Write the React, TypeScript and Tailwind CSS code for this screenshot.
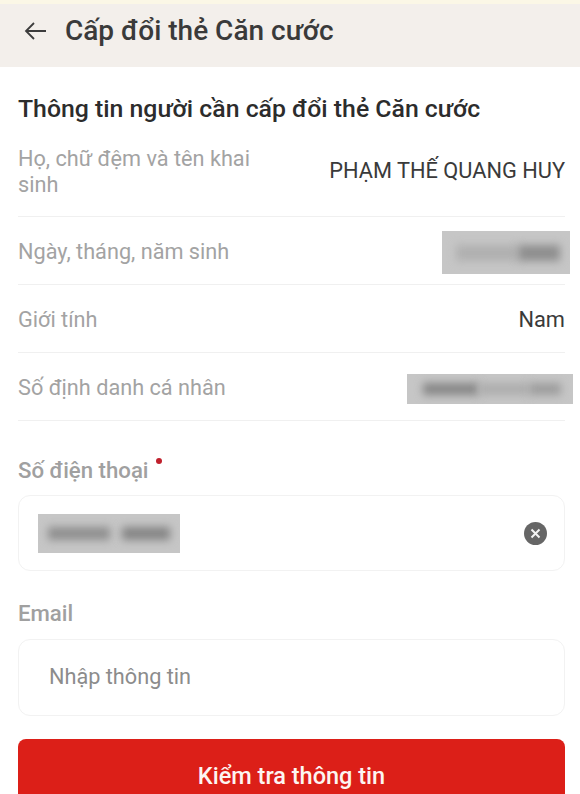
import React from 'react';

function Redacted({ className, bars }: { className: string; bars: string[] }) {
  return (
    <div className={`flex items-center overflow-hidden bg-[#c6c6c6] ${className}`}>
      {bars.map((b, i) => (
        <div key={i} className={`blur-[4px] ${b}`} />
      ))}
    </div>
  );
}

function InfoRow({ label, children }: { label: string; children: React.ReactNode }) {
  return (
    <div className="flex h-[68px] items-center justify-between border-b border-[#f0f0f0] pt-[4px]">
      <span className="text-[21.7px] text-[#a3a3a3]">{label}</span>
      {children}
    </div>
  );
}

export default function App() {
  return (
    <div className="h-[794px] w-[580px] overflow-hidden bg-white font-['Roboto',sans-serif]">
      <div className="h-[4px] bg-[#fbf7e6]" />
      <header className="flex h-[63px] items-center bg-[#f3efeb] pb-[9px] pl-[24px]">
        <svg width="23" height="20" viewBox="0 0 23 20" fill="none" stroke="#3c3c3c" strokeWidth="1.8">
          <path d="M22 10H2M10 2L2 10l8 8" />
        </svg>
        <h1 className="ml-[18px] text-[28px] font-medium text-[#3a3a3a]">Cấp đổi thẻ Căn cước</h1>
      </header>

      <main className="px-[15px] pl-[18px]">
        <h2 className="mt-[26px] text-[24.8px] leading-[32px] font-medium text-[#2c2c2c]">
          Thông tin người cần cấp đổi thẻ Căn cước
        </h2>

        <div className="mt-[2px] flex h-[90px] items-center justify-between border-b border-[#f0f0f0]">
          <span className="w-[250px] text-[21.7px] leading-[26px] text-[#a3a3a3]">Họ, chữ đệm và tên khai sinh</span>
          <span className="text-[21.8px] text-[#3a3a3a]">PHẠM THẾ QUANG HUY</span>
        </div>
        <InfoRow label="Ngày, tháng, năm sinh">
          <Redacted
            className="mr-[-5px] h-[43px] w-[128px] pl-[14px]"
            bars={['h-[16px] w-[62px] bg-[#b0b0b0]', 'h-[16px] w-[42px] bg-[#8e8e8e]']}
          />
        </InfoRow>
        <InfoRow label="Giới tính">
          <span className="text-[21.8px] text-[#3a3a3a]">Nam</span>
        </InfoRow>
        <InfoRow label="Số định danh cá nhân">
          <Redacted
            className="mr-[-8px] h-[30px] w-[166px] pl-[16px]"
            bars={['h-[12px] w-[56px] bg-[#868686]', 'h-[12px] w-[50px] bg-[#adadad]', 'h-[12px] w-[32px] bg-[#9c9c9c]']}
          />
        </InfoRow>

        <div className="mt-[35px] flex items-start">
          <span className="text-[22.2px] leading-[28px] font-medium text-[#a0a0a0]">Số điện thoại</span>
          <span className="mt-[2px] ml-[7px] size-[6px] rounded-full bg-[#c0202c]" />
        </div>
        <div className="mt-[11px] flex h-[76px] items-center justify-between rounded-[12px] border border-[#f2f2f2] pr-[17px] pl-[19px]">
          <Redacted
            className="h-[39px] w-[142px] pl-[10px]"
            bars={['h-[13px] w-[62px] bg-[#8e8e8e]', 'ml-[12px] h-[13px] w-[48px] bg-[#848484]']}
          />
          <span className="flex size-[23px] items-center justify-center rounded-full bg-[#666666]">
            <svg width="11" height="11" viewBox="0 0 11 11" stroke="#f4f4f4" strokeWidth="2">
              <path d="M1.5 1.5l8 8M9.5 1.5l-8 8" />
            </svg>
          </span>
        </div>

        <div className="mt-[28px] text-[22.2px] leading-[28px] font-medium text-[#a0a0a0]">Email</div>
        <div className="mt-[12px] flex h-[77px] items-center rounded-[12px] border border-[#f2f2f2] pl-[30px]">
          <span className="text-[21.7px] text-[#8c8c8c]">Nhập thông tin</span>
        </div>

        <button className="mt-[23px] flex h-[70px] w-full items-start justify-center rounded-[8px] bg-[#dc1f18] pt-[20px] text-[23.5px] font-medium text-[#fdf5f2]">
          Kiểm tra thông tin
        </button>
      </main>
    </div>
  );
}
